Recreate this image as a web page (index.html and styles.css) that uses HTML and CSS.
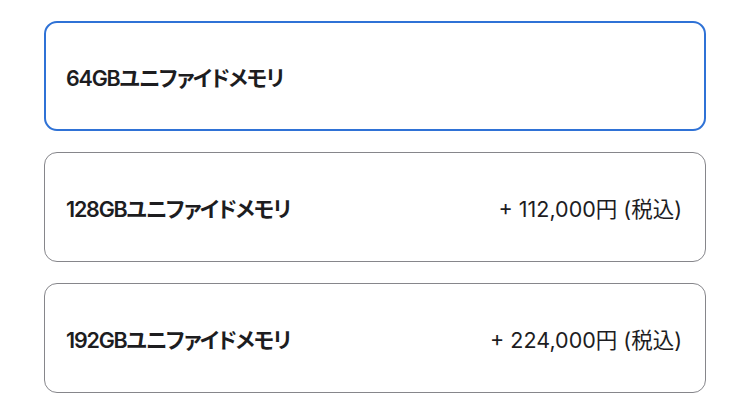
FILE: index.html
```html
<!DOCTYPE html>
<html lang="ja">
<head>
    <meta charset="UTF-8">
    <meta name="viewport" content="width=device-width, initial-scale=1.0">
    <title>メモリ</title>
    <link rel="stylesheet" href="styles.css">
</head>
<body>
    <div id="options">
        <label class="option selected">
            <span class="option-name">64GBユニファイドメモリ</span>
        </label>
        <label class="option">
            <span class="option-name">128GBユニファイドメモリ</span>
            <span class="option-price">+ 112,000円 (税込)</span>
        </label>
        <label class="option">
            <span class="option-name">192GBユニファイドメモリ</span>
            <span class="option-price">+ 224,000円 (税込)</span>
        </label>
    </div>
</body>
</html>
```

FILE: styles.css
```css
* {
    box-sizing: border-box;
}

body {
    margin: 0;
    background-color: #fff;
    color: #1d1d1f;
    font-family: Inter, "Noto Sans CJK JP", sans-serif;
    font-feature-settings: "palt";
}

#options {
    display: flex;
    flex-direction: column;
    gap: 21px;
    width: 662px;
    margin-left: 44px;
    padding-top: 21px;
}

.option {
    display: flex;
    align-items: center;
    justify-content: space-between;
    height: 110px;
    padding: 0 23px 0 21px;
    border: 1px solid #86868b;
    border-radius: 13px;
}

.option.selected {
    border: 2px solid #2f72d6;
    padding-left: 20px;
}

.option-name {
    font-size: 21.5px;
    font-weight: 600;
    letter-spacing: -1.2px;
}

.option-price {
    font-size: 21.5px;
    font-weight: 400;
}
```
